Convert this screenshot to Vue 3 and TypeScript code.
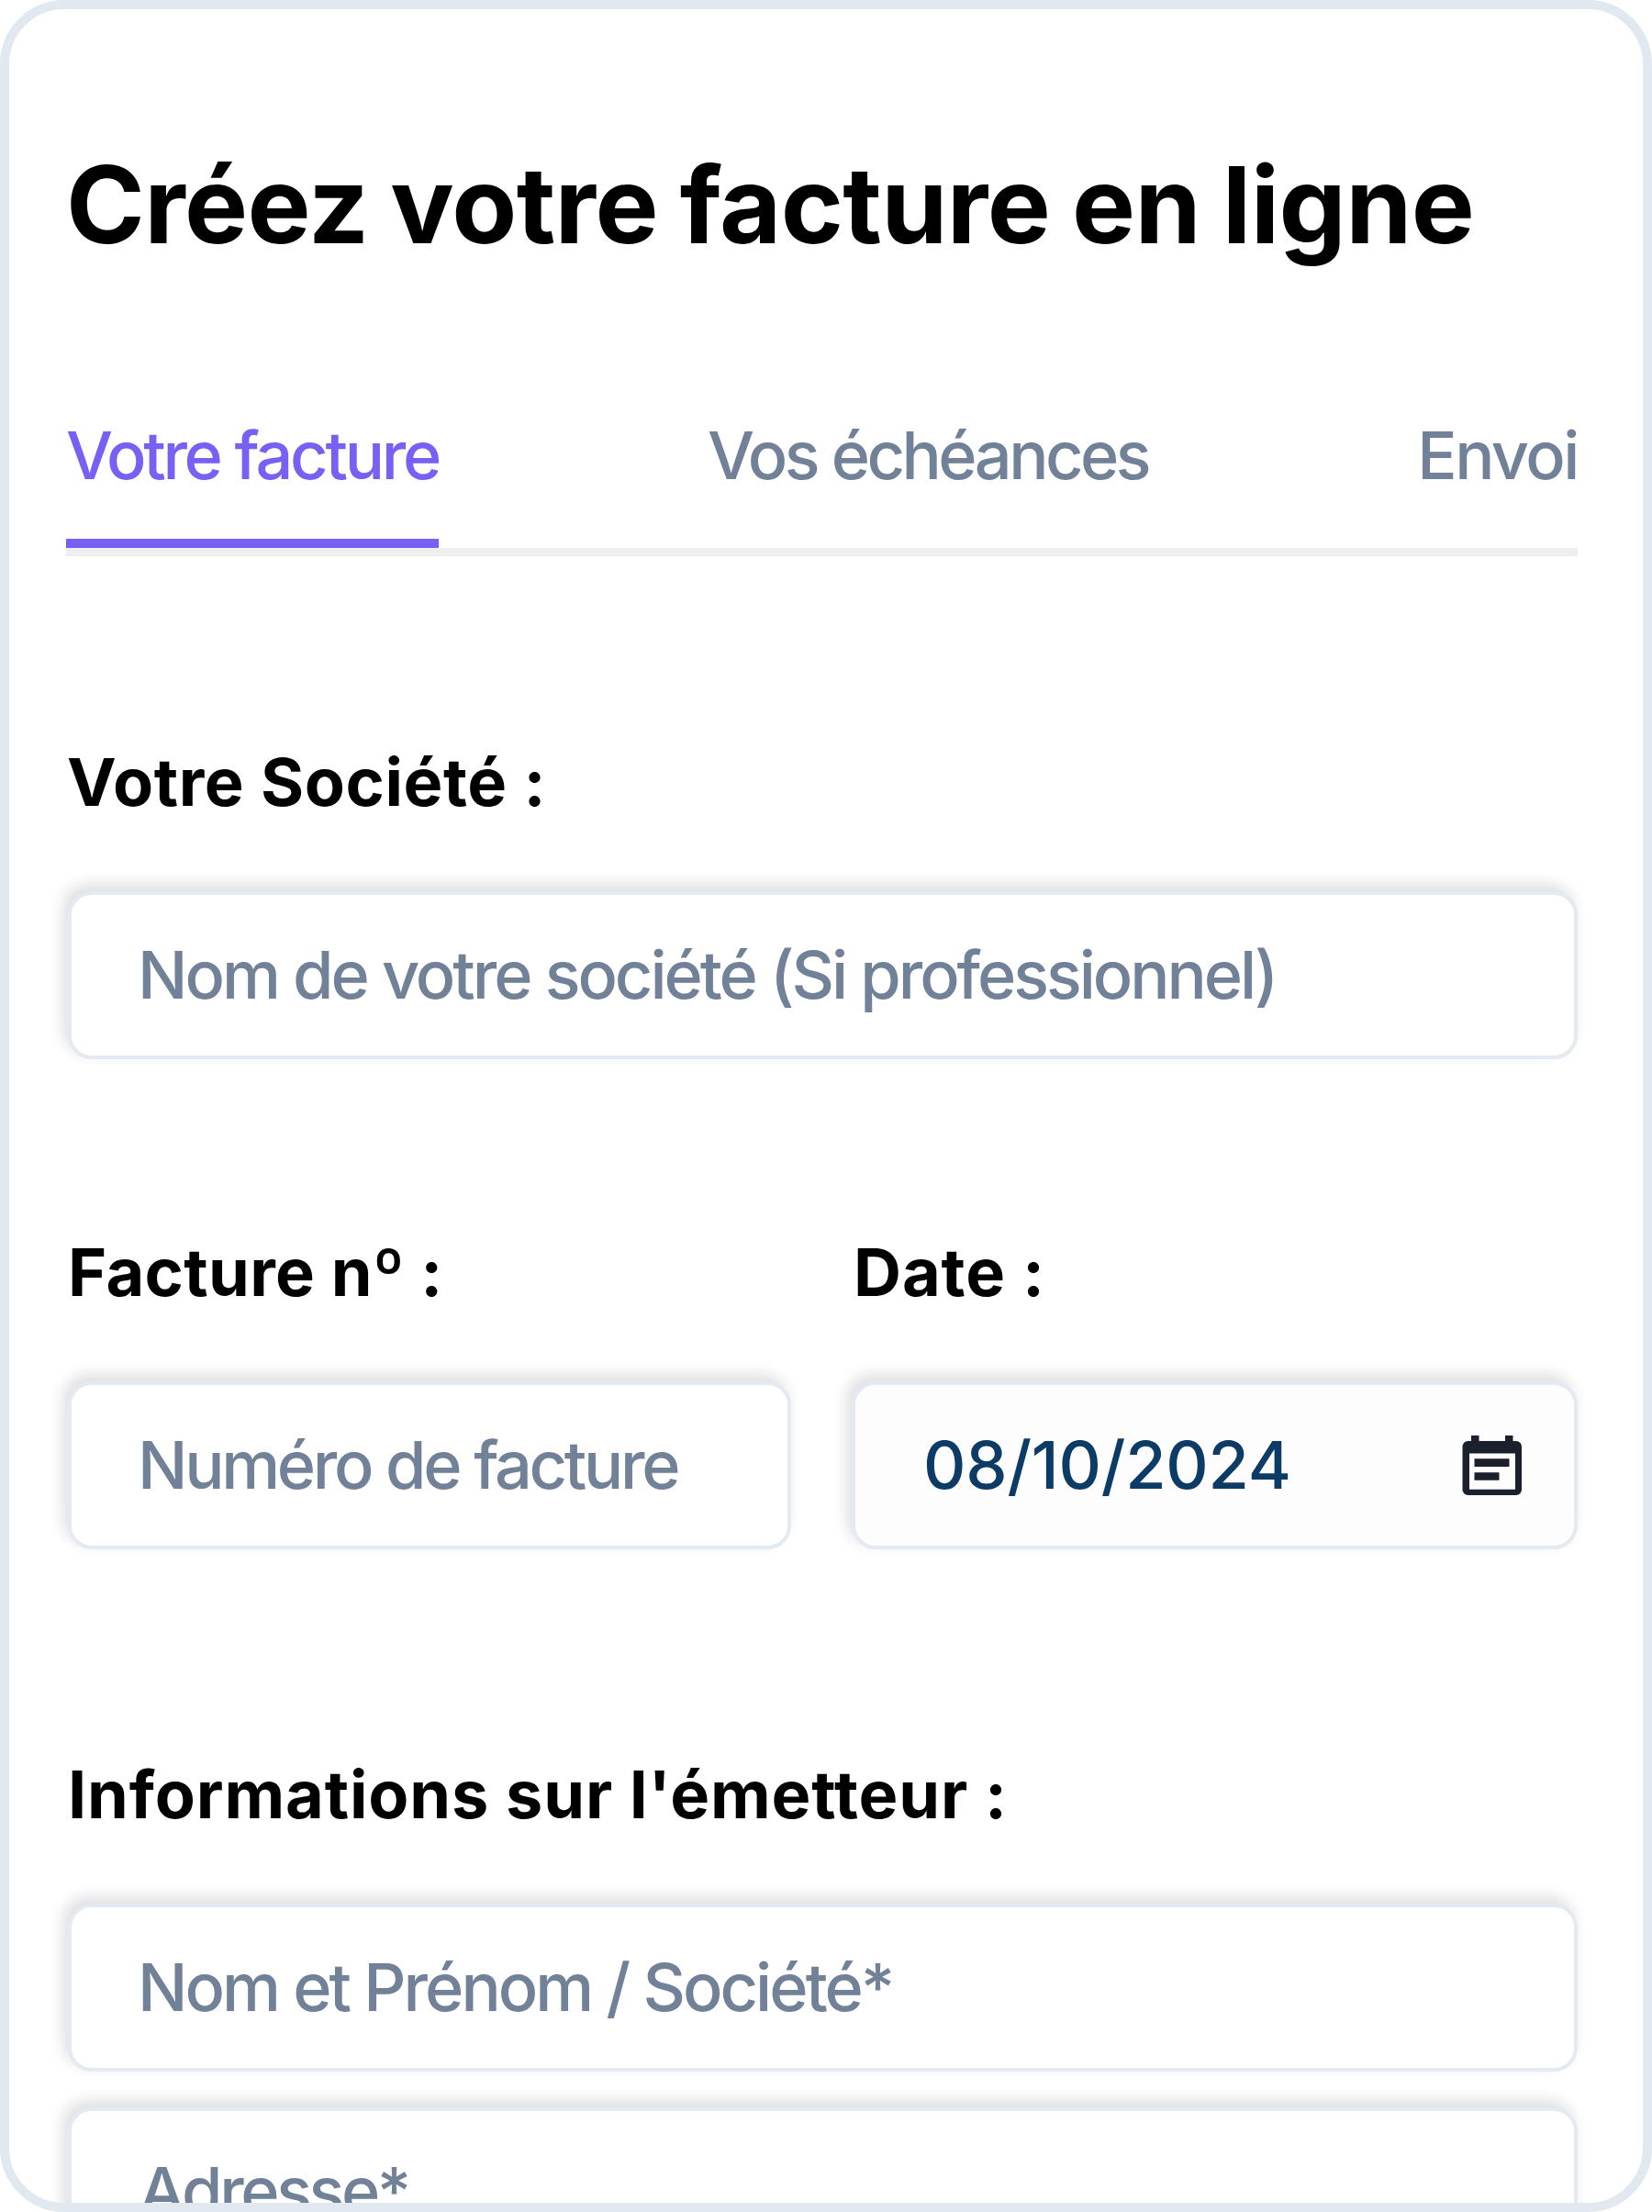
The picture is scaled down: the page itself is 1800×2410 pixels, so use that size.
<script setup lang="ts">
interface Tab {
  id: string
  label: string
  active?: boolean
}

const tabs: Tab[] = [
  { id: 'invoice', label: 'Votre facture', active: true },
  { id: 'terms', label: 'Vos échéances' },
  { id: 'send', label: 'Envoi' },
]
</script>

<template>
  <main class="card">
    <h1 class="title">Créez votre facture en ligne</h1>

    <nav class="tabs">
      <a v-for="tab in tabs" :key="tab.id" class="tab" :class="[tab.id, { active: tab.active }]">{{ tab.label }}</a>
    </nav>

    <section class="group company">
      <h2 class="label company-label">Votre Société :</h2>
      <div class="field"><span class="placeholder name">Nom de votre société (Si professionnel)</span></div>
    </section>

    <section class="row">
      <div class="group">
        <h2 class="label">Facture nº :</h2>
        <div class="field"><span class="placeholder number">Numéro de facture</span></div>
      </div>
      <div class="group">
        <h2 class="label date-label">Date :</h2>
        <div class="field filled">
          <span class="value">08/10/2024</span>
          <svg class="calendar" viewBox="0 0 66 67" width="66" height="67">
            <path
              fill="#1a202c"
              fill-rule="evenodd"
              d="M10 1h8.500v6h28.500v-6h8.500v6H59a6 6 0 0 1 6 6v47a6 6 0 0 1-6 6H6.500a6 6 0 0 1-6-6V13a6 6 0 0 1 6-6H10zM8 20.500v39.300h50V20.500z"
            />
            <path fill="#1a202c" d="M13.500 26.300h38v8.700h-38zM13.500 41.300h27v8.400h-27z" />
          </svg>
        </div>
      </div>
    </section>

    <section class="group sender">
      <h2 class="label sender-label">Informations sur l'émetteur :</h2>
      <div class="field"><span class="placeholder identity">Nom et Prénom / Société*</span></div>
      <div class="field next"><span class="placeholder address">Adresse*</span></div>
    </section>
  </main>
</template>

<style>
body {
  background: #fff;
}
</style>

<style scoped>
.card {
  box-sizing: border-box;
  width: 1800px;
  height: 2410px;
  padding: 143px 71px 0 62px;
  border: 10px solid #e1e8f0;
  border-radius: 70px;
  background: #fff;
  color: #000;
  font-family: Inter, 'Liberation Sans', sans-serif;
  overflow: hidden;
}

.title {
  margin: 0;
  font-size: 116px;
  font-weight: 700;
  line-height: 140px;
  letter-spacing: -0.6px;
  word-spacing: -3.1px;
  white-space: nowrap;
}

.tabs {
  display: flex;
  justify-content: space-between;
  margin-top: 159px;
  border-bottom: 9px solid #eee;
}

.tab {
  padding-bottom: 47px;
  border-bottom: 10px solid transparent;
  color: #718198;
  font-size: 72px;
  font-weight: 480;
  line-height: 88px;
  white-space: nowrap;
}

.tab.active {
  border-color: #7661f4;
  color: #7661f4;
}

.invoice {
  letter-spacing: -3.25px;
}

.terms {
  letter-spacing: -3.5px;
}

.send {
  letter-spacing: -2.5px;
}

.group {
  display: flex;
  flex-direction: column;
}

.company {
  margin-top: 202px;
}

.label {
  margin: 0 0 75px 2px;
  font-size: 72px;
  font-weight: 670;
  line-height: 88px;
  letter-spacing: 0.35px;
  white-space: nowrap;
}

.company-label {
  margin-left: 1px;
  letter-spacing: 0.6px;
}

.field {
  display: flex;
  align-items: center;
  justify-content: space-between;
  box-sizing: border-box;
  height: 183px;
  margin-left: 2px;
  padding: 0 56px 0 72px;
  border: 4px solid #e4eaf2;
  border-radius: 26px;
  background: #fff;
  box-shadow: -5px -7px 16px #1a142c26;
  font-size: 72px;
  font-weight: 480;
  line-height: 88px;
  white-space: nowrap;
}

.filled {
  margin-left: 1px;
  padding-left: 74px;
  background: #fdfdfd;
}

.placeholder {
  padding-bottom: 2px;
  color: #718198;
}

.value {
  padding-bottom: 2px;
  color: #0c3b66;
  font-weight: 460;
  letter-spacing: -0.2px;
}

.name {
  letter-spacing: -3.03px;
}

.number {
  letter-spacing: -3.3px;
}

.identity {
  letter-spacing: -2.96px;
}

.address {
  margin-left: 1px;
  letter-spacing: -3.4px;
}

.row {
  display: grid;
  grid-template-columns: 790px 792px;
  justify-content: space-between;
  margin-top: 188px;
}

.date-label {
  margin-left: 3px;
  letter-spacing: 0.9px;
}

.calendar {
  flex: none;
}

.sender {
  margin-top: 223px;
}

.sender-label {
  letter-spacing: 0.86px;
}

.next {
  margin-top: 39px;
}
</style>
